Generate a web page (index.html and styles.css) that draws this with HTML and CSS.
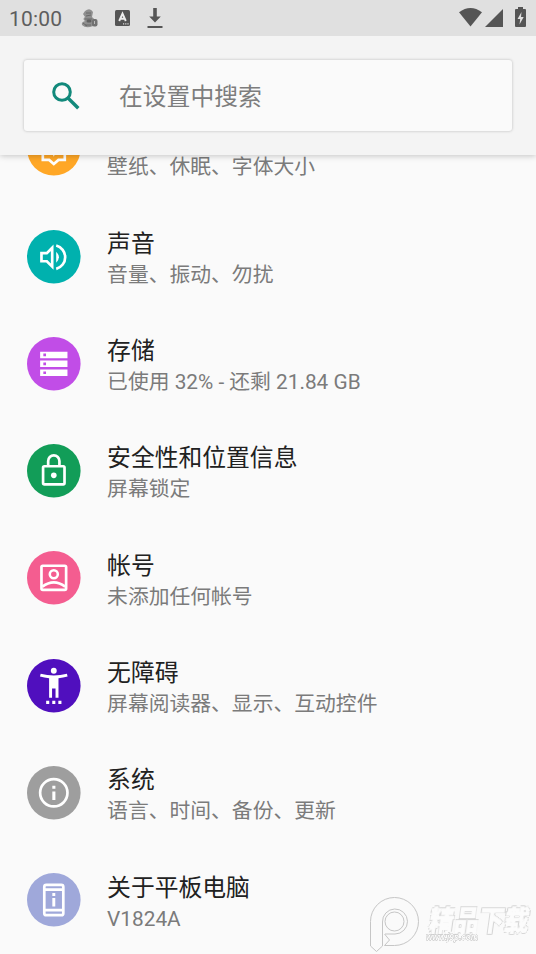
FILE: index.html
```html
<!DOCTYPE html>
<html lang="zh-CN">
<head>
<meta charset="utf-8">
<title>设置</title>
<link rel="stylesheet" href="styles.css">
</head>
<body>
<div class="screen">
  <header class="top">
    <div class="status">
      <span class="clock">10:00</span>
      <svg class="debug" viewBox="0 0 18 20"><path d="M4 2Q9-2 12 3L11 8Q16 11 12 17Q5 20 1 16Q0 13 4 12Q1 10 4 8L2 5Z" fill="#8f8f8f"/><path d="M5 4h5M5 7l5-1M4 10h7M4 16h6M2 14l4 3" stroke="#696969" fill="none"/><rect x="5.500" y="10.500" width="5" height="3" rx="1.500" fill="#606060"/><rect x="11" y="10" width="5.500" height="7.500" rx="2" fill="#727272"/><path d="M13.500 12v3" stroke="#bbb"/></svg>
      <svg class="keyboard" viewBox="0 0 15 16"><rect width="15" height="16" rx="1.500" fill="#555"/><path d="M4.200 11L7.500 3.500L10.800 11M5.300 8.700h4.400" fill="none" stroke="#eee" stroke-width="1.900"/><path d="M8 13.800h6" stroke="#ddd" stroke-width="1.200" stroke-dasharray="1.200 1"/></svg>
      <svg class="download" viewBox="0 0 16 21"><path d="M6.200 0h3.600v8.500h4L8 14.500L2.200 8.500h4zM.5 18h15v2H.5z" fill="#555"/></svg>
      <svg class="wifi" viewBox="0 0 23 19"><path d="M0 4.300Q11.500-4.300 23 4.300L11.500 18.500z" fill="#555"/></svg>
      <svg class="signal" viewBox="0 0 18 18"><path d="M18 0v18H0z" fill="#555"/></svg>
      <svg class="battery" viewBox="0 0 11 20"><path d="M3 0h5v2h2q1 0 1 1v16q0 1-1 1H1q-1 0-1-1V3q0-1 1-1h2z" fill="#555"/><path d="M6.500 5L2.500 12h2.700L4.500 17.500L8.700 10H6z" fill="#e0e0e0"/></svg>
    </div>
    <div class="search">
      <svg class="glass" viewBox="0 0 28 28"><circle cx="10" cy="10" r="8.300" fill="none" stroke="#12897b" stroke-width="3"/><path d="M16 16L26.300 26.300" stroke="#12897b" stroke-width="3.400"/></svg>
      <span class="hint">在设置中搜索</span>
    </div>
  </header>
  <main class="list">
    <div class="row">
      <svg class="icon" viewBox="0 0 40 40"><circle cx="20" cy="20" r="20" fill="#ffa726"/><path d="M11.800 11h16.400v17.300h-4.700L20 31.300l-3.500-3h-4.700z" fill="none" stroke="#fff" stroke-width="2"/><path d="M20 16l1.500 3.500L25 21l-3.500 1.300L20 26l-1.500-3.700L15 21l3.500-1.500z" fill="#fff"/></svg>
      <div class="text"><div class="title">显示</div><div class="sub">壁纸、休眠、字体大小</div></div>
    </div>
    <div class="row">
      <svg class="icon" viewBox="0 0 40 40"><circle cx="20" cy="20" r="20" fill="#00b1ae"/><path d="M10.800 17.300h4l4-4v14l-4-4h-4z" fill="none" stroke="#fff" stroke-width="2"/><path d="M21.800 16.200q4 4.100 0 8.200z" fill="#fff"/><path d="M21.800 11.600a9 9 0 0 1 0 17.400" fill="none" stroke="#fff" stroke-width="2"/></svg>
      <div class="text"><div class="title">声音</div><div class="sub">音量、振动、勿扰</div></div>
    </div>
    <div class="row">
      <svg class="icon" viewBox="0 0 40 40"><circle cx="20" cy="20" r="20" fill="#c14de7"/><path d="M9.800 11h20.400v4.800H9.800zM9.800 17.600h20.400v4.800H9.800zM9.800 24.300h20.400v4.800H9.800z" fill="#fff"/><path d="M12.200 12.400h2v2h-2zM12.200 19h2v2h-2zM12.200 25.700h2v2h-2z" fill="#c14de7"/></svg>
      <div class="text"><div class="title">存储</div><div class="sub">已使用 32% - 还剩 21.84 GB</div></div>
    </div>
    <div class="row">
      <svg class="icon" viewBox="0 0 40 40"><circle cx="20" cy="20" r="20" fill="#129d58"/><rect x="12" y="16.600" width="16" height="13.600" rx="1" fill="none" stroke="#fff" stroke-width="2"/><path d="M15.800 16.500v-3.800a4.200 4.200 0 0 1 8.400 0v3.800" fill="none" stroke="#fff" stroke-width="2"/><circle cx="20" cy="23.400" r="2.100" fill="#fff"/></svg>
      <div class="text"><div class="title">安全性和位置信息</div><div class="sub">屏幕锁定</div></div>
    </div>
    <div class="row">
      <svg class="icon" viewBox="0 0 40 40"><circle cx="20" cy="20" r="20" fill="#f45d90"/><rect x="10.800" y="11" width="18.400" height="18" rx="1" fill="none" stroke="#fff" stroke-width="2"/><circle cx="20" cy="17.300" r="3" fill="none" stroke="#fff" stroke-width="1.900"/><path d="M11.500 26.600Q20 20.300 28.500 26.600" fill="none" stroke="#fff" stroke-width="2"/></svg>
      <div class="text"><div class="title">帐号</div><div class="sub">未添加任何帐号</div></div>
    </div>
    <div class="row">
      <svg class="icon" viewBox="0 0 40 40"><circle cx="20" cy="20" r="20" fill="#500fbe"/><circle cx="20" cy="8.800" r="2.200" fill="#fff"/><path d="M10.200 11.100Q20 13.600 29.800 11.100L30.300 13.100Q27 14 23.500 14.300V29h-2.200v-7h-2.600v7h-2.200V14.300Q13 14 9.700 13.100zM14.300 31.200h2.300v2.300h-2.300zM18.850 31.200h2.300v2.300h-2.300zM23.400 31.200h2.300v2.300h-2.300z" fill="#fff"/></svg>
      <div class="text"><div class="title">无障碍</div><div class="sub">屏幕阅读器、显示、互动控件</div></div>
    </div>
    <div class="row">
      <svg class="icon" viewBox="0 0 40 40"><circle cx="20" cy="20" r="20" fill="#9e9e9e"/><circle cx="20" cy="20" r="10.200" fill="none" stroke="#fff" stroke-width="2"/><path d="M18.900 14.800h2.300v2.200h-2.300zM18.900 19h2.300v6.300h-2.300z" fill="#fff"/></svg>
      <div class="text"><div class="title">系统</div><div class="sub">语言、时间、备份、更新</div></div>
    </div>
    <div class="row">
      <svg class="icon" viewBox="0 0 40 40"><circle cx="20" cy="20" r="20" fill="#9fa8da"/><rect x="12.900" y="8.800" width="14.200" height="22.700" rx="1.500" fill="none" stroke="#fff" stroke-width="2"/><path d="M13 12.400h14M13 27.700h14" stroke="#fff" stroke-width="2"/><path d="M18.900 15h2.200v2.200h-2.200zM18.900 18.700h2.200v6.300h-2.200z" fill="#fff"/></svg>
      <div class="text"><div class="title">关于平板电脑</div><div class="sub">V1824A</div></div>
    </div>
  </main>
  <svg class="mark" viewBox="0 0 168 58">
    <path d="M2.500 50V25.500A24 24 0 1 1 26.500 49.500H16.500L21.500 44L16.500 38M14.500 26V50L8.500 55.500L2.500 50M14.500 26A12.500 12.500 0 1 1 27 38H17" fill="none" stroke="#c6c6c6"/>
    <circle cx="26.500" cy="25.500" r="9.500" fill="none" stroke="#c6c6c6"/>
    <text class="mark-name" transform="translate(60 35) skewX(-8)" textLength="100" lengthAdjust="spacingAndGlyphs">精品下载</text>
    <text class="mark-url" x="58" y="44" textLength="52" lengthAdjust="spacingAndGlyphs">www.j9p.com</text>
  </svg>
</div>
</body>
</html>
```

FILE: styles.css
```css
body {
  margin: 0;
  background: #fafafa;
  font-family: Roboto, "Noto Sans CJK SC", sans-serif;
}

.screen {
  position: relative;
  height: 954px;
  overflow: hidden;
}

svg {
  display: block;
  flex: none;
  overflow: visible;
}

.top {
  position: relative;
  z-index: 1;
  height: 155px;
  background: #f4f4f4;
  box-shadow: 0 1px 6px rgba(0, 0, 0, 0.22);
}

.status {
  display: flex;
  align-items: flex-start;
  box-sizing: border-box;
  height: 36px;
  padding: 0 10px 0 9px;
  background: #e0e0e0;
}

.clock {
  width: 72px;
  padding-top: 1px;
  color: #5e5e5e;
  font-size: 21px;
  line-height: 36px;
  letter-spacing: 0.2px;
}

.debug { width: 18px; height: 20px; margin-top: 9px; }
.keyboard { width: 15px; height: 16px; margin: 10px 0 0 16px; }
.download { width: 16px; height: 21px; margin: 8px 0 0 17px; }
.wifi { width: 23px; height: 19px; margin: 8px 0 0 auto; }
.signal { width: 18px; height: 18px; margin: 9px 0 0 3px; }
.battery { width: 11px; height: 20px; margin: 7px 0 0 12px; }

.search {
  display: flex;
  align-items: center;
  gap: 39.5px;
  box-sizing: border-box;
  height: 71px;
  margin: 24px 24px 0;
  padding-left: 27.5px;
  border-radius: 3px;
  background: #fafafa;
  box-shadow: 0 0 3px rgba(0, 0, 0, 0.25);
  color: #7d7d7d;
  font-size: 23.8px;
}

.glass { width: 28px; height: 28px; }

.hint { padding-bottom: 3px; }

.list { margin-top: -59.7px; }

.row {
  display: flex;
  align-items: center;
  gap: 27px;
  height: 107.33px;
  padding-left: 26.5px;
}

.icon { width: 53.6px; height: 53.6px; }

.text { padding-top: 5px; }

.title {
  color: #212121;
  font-size: 23.8px;
  line-height: 33px;
}

.sub {
  color: #7b7b7b;
  font-size: 20.8px;
  line-height: 29px;
}

.mark {
  position: absolute;
  left: 368px;
  top: 896px;
  width: 168px;
  height: 58px;
}

.mark-name,
.mark-url {
  fill: #fcfcfc;
  stroke: #fcfcfc;
  filter: drop-shadow(0 0 0.5px #999) drop-shadow(0 0 0.3px #bbb);
}

.mark-name {
  font: 900 28px "Noto Sans CJK SC", sans-serif;
  stroke-width: 1px;
}

.mark-url {
  font: italic 700 9.5px "Liberation Sans", sans-serif;
  stroke-width: 0.3px;
}
```
